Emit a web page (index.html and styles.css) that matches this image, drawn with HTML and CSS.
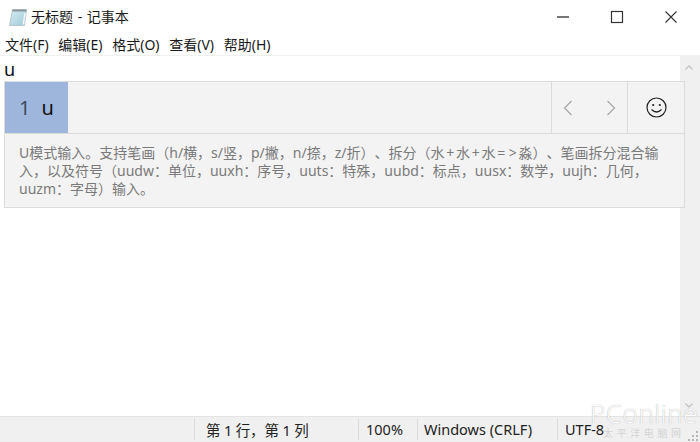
FILE: index.html
```html
<!DOCTYPE html>
<html lang="zh">
<head>
<meta charset="utf-8">
<title>无标题 - 记事本</title>
<link rel="stylesheet" href="styles.css">
</head>
<body>
<div class="app">
  <header class="titlebar">
    <svg class="app-icon" width="20" height="20" viewBox="0 0 20 20">
      <defs><linearGradient id="pad" x1="0" y1="0" x2="1" y2="1"><stop offset="0" stop-color="#d8edf3"/><stop offset="1" stop-color="#9ccbd6"/></linearGradient></defs>
      <path d="M4.5 2.5 H18.5 L16.5 18.5 H1.5 Z" fill="url(#pad)" stroke="#a9bcc2" stroke-width="0.8"/>
      <path d="M4.5 2.5 H18.5 L18.2 4.6 H4.2 Z" fill="#8c979c"/>
      <path d="M17 6 L15.3 17.5" stroke="#f2f8fa" stroke-width="1.6"/>
    </svg>
    <span class="title">无标题 - 记事本</span>
    <div class="win-buttons">
      <svg class="win-btn" width="14" height="14" viewBox="0 0 14 14"><path d="M1 7 H13" stroke="#555" stroke-width="1.6"/></svg>
      <svg class="win-btn" width="14" height="14" viewBox="0 0 14 14"><rect x="1.5" y="1.5" width="11" height="11" fill="none" stroke="#333" stroke-width="1.2"/></svg>
      <svg class="win-btn" width="14" height="14" viewBox="0 0 14 14"><path d="M1.5 1.5 L12.5 12.5 M12.5 1.5 L1.5 12.5" stroke="#333" stroke-width="1.1"/></svg>
    </div>
  </header>
  <nav class="menubar">
    <span>文件(F)</span><span>编辑(E)</span><span>格式(O)</span><span>查看(V)</span><span>帮助(H)</span>
  </nav>
  <main class="editor">
    <div class="text-area">u</div>
    <div class="scrollbar">
      <svg width="10" height="8" viewBox="0 0 10 8"><path d="M1.5 5.5 L5 2 L8.5 5.5" fill="none" stroke="#c4c4c4" stroke-width="1.3"/></svg>
      <svg width="10" height="8" viewBox="0 0 10 8"><path d="M1.5 2.5 L5 6 L8.5 2.5" fill="none" stroke="#c4c4c4" stroke-width="1.3"/></svg>
    </div>
  </main>
  <footer class="statusbar">
    <span class="cell cell-pos">第 1 行，第 1 列</span>
    <span class="cell cell-zoom">100%</span>
    <span class="cell cell-eol">Windows (CRLF)</span>
    <span class="cell cell-enc">UTF-8</span>
  </footer>

  <section class="ime">
    <div class="ime-row">
      <div class="candidate"><span class="num">1</span><span class="cand">u</span></div>
      <div class="ime-fill"></div>
      <div class="ime-nav">
        <svg width="14" height="18" viewBox="0 0 14 18"><path d="M10.5 2 L3.5 9 L10.5 16" fill="none" stroke="#a6a6a6" stroke-width="1.2"/></svg>
        <svg width="14" height="18" viewBox="0 0 14 18"><path d="M3.5 2 L10.5 9 L3.5 16" fill="none" stroke="#a6a6a6" stroke-width="1.2"/></svg>
      </div>
      <div class="ime-emoji">
        <svg width="21" height="21" viewBox="0 0 21 21"><circle cx="10.5" cy="10.5" r="9.5" fill="none" stroke="#222" stroke-width="1.2"/><circle cx="7.2" cy="8" r="1.1" fill="#222"/><circle cx="13.8" cy="8" r="1.1" fill="#222"/><path d="M5.5 12.5 Q10.5 17.5 15.5 12.5" fill="none" stroke="#222" stroke-width="1.2"/></svg>
      </div>
    </div>
    <p class="ime-hint">U模式输入。支持笔画（h/横，s/竖，p/撇，n/捺，z/折）、拆分（水<span class="op">+</span>水<span class="op">+</span>水<span class="op">=</span><span class="op">&gt;</span>淼）、笔画拆分混合输<br>入，以及符号（uudw：单位，uuxh：序号，uuts：特殊，uubd：标点，uusx：数学，uujh：几何，<br>uuzm：字母）输入。</p>
  </section>

  <div class="watermark">PConline<small>太平洋电脑网</small></div>
  <svg class="grip" width="12" height="12" viewBox="0 0 12 12"><g fill="#b5b5b5"><rect x="9" y="9" width="2" height="2"/><rect x="5" y="9" width="2" height="2"/><rect x="1" y="9" width="2" height="2"/><rect x="9" y="5" width="2" height="2"/><rect x="5" y="5" width="2" height="2"/><rect x="9" y="1" width="2" height="2"/></g></svg>
</div>
</body>
</html>
```
FILE: styles.css
```css
* { box-sizing: border-box; }
html, body { margin: 0; height: 100%; background: #fff; overflow: hidden; }
body { font-family: "Noto Sans", "Noto Sans CJK SC", sans-serif; color: #1a1a1a; text-spacing-trim: space-all; }
.app { position: relative; width: 700px; height: 442px; display: flex; flex-direction: column; }

.titlebar { height: 33px; display: flex; align-items: center; padding-left: 8px; flex: none; }
.app-icon { flex: none; }
.title { margin-left: 3px; font-size: 14px; line-height: 20px; word-spacing: 1px; }
.win-buttons { margin-left: auto; display: flex; align-items: center; gap: 40px; padding-right: 22px; }
.win-btn { display: block; }

.menubar { height: 23px; display: flex; align-items: center; gap: 9.7px; padding-left: 5px; font-size: 14px; flex: none; border-bottom: 1px solid #f0f0f0; }

.editor { flex: 1; display: flex; min-height: 0; }
.text-area { flex: 1; padding-left: 4px; font-size: 18px; line-height: 27px; color: #111; }
.scrollbar { width: 20px; background: #f0f0f0; display: flex; flex-direction: column; justify-content: space-between; align-items: center; padding: 8px 2px 7px 0; }

.statusbar { height: 26px; flex: none; background: #f0f0f0; border-top: 1px solid #e4e4e4; display: flex; padding-left: 194px; font-size: 14.5px; }
.cell { display: flex; align-items: center; border-left: 1px solid #dcdcdc; margin: 1px 0 2px; padding-left: 11px; white-space: nowrap; color: #222; }
.cell-pos { width: 164px; letter-spacing: -0.15px; }
.cell-zoom { width: 59px; padding-left: 7px; }
.cell-eol { width: 140px; padding-left: 6px; }
.cell-enc { width: 130px; padding-left: 7px; }

.ime { position: absolute; left: 4px; top: 81px; width: 681px; background: #f3f3f3; border: 1px solid #dcdcdc; }
.ime-row { height: 52px; display: flex; border-bottom: 1px solid #dcdcdc; }
.candidate { width: 63px; background: #9fb6dc; display: flex; align-items: center; padding-left: 14px; gap: 11px; font-size: 20px; }
.num { color: #3c4a60; }
.cand { color: #111; }
.ime-fill { flex: 1; }
.ime-nav { width: 76px; border-left: 1px solid #dcdcdc; display: flex; align-items: center; justify-content: space-between; padding: 0 9px; }
.ime-emoji { width: 57px; border-left: 1px solid #dcdcdc; display: flex; align-items: center; justify-content: center; }
.ime-hint { margin: 0; height: 73px; padding: 10px 0 0 14px; font-size: 14px; line-height: 18px; color: #7a7a7a; white-space: nowrap; }
.op { display: inline-block; width: 11.5px; text-align: center; }

.watermark { position: absolute; left: 590px; top: 399px; width: 104px; font-size: 26px; line-height: 28px; letter-spacing: 0.6px; white-space: nowrap; font-family: "Open Sans", sans-serif; font-weight: 300; color: #fff; text-shadow: 0 0 1px #999; }
.watermark small { display: block; font-family: "Noto Sans CJK SC", sans-serif; font-weight: 400; font-size: 10px; line-height: 11px; letter-spacing: 3.6px; color: rgba(205,205,205,.8); text-shadow: none; margin-left: 13px; }
.grip { position: absolute; right: 1px; bottom: 0; }
```
